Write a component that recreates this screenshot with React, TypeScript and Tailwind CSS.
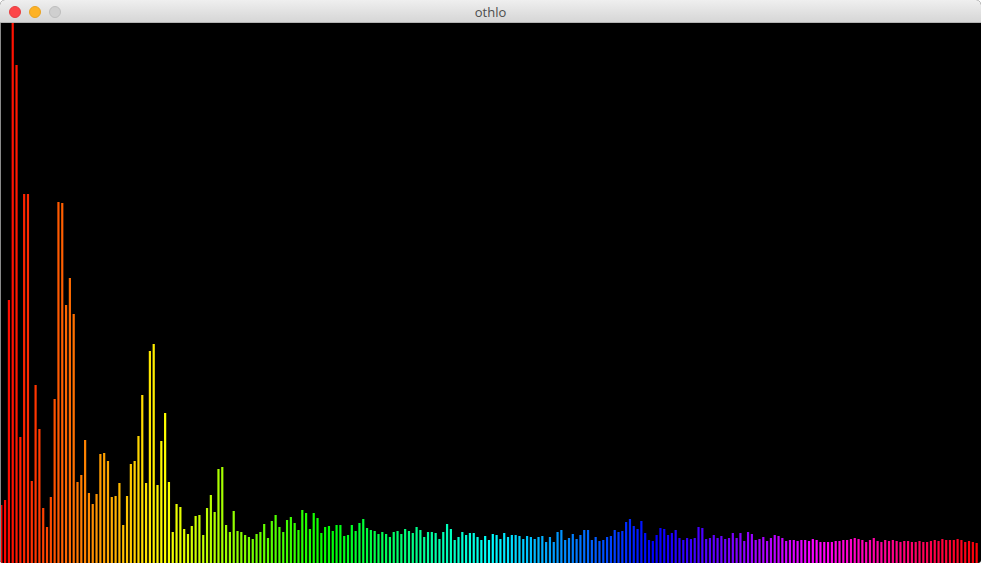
const tops = [
  505, 500, 300, 23, 65, 437, 194, 194, 481, 385, 429, 508, 527, 497, 399, 202, 203, 305, 278, 314,
  482, 475, 440, 493, 504, 494, 454, 453, 461, 497, 496, 483, 525, 496, 464, 461, 436, 395, 483, 351,
  344, 485, 441, 413, 482, 532, 504, 507, 529, 534, 526, 516, 515, 535, 508, 495, 512, 469, 467, 525,
  532, 511, 531, 532, 535, 537, 539, 534, 532, 524, 538, 521, 515, 527, 532, 520, 517, 523, 530, 510,
  513, 529, 513, 518, 533, 527, 526, 531, 525, 525, 536, 535, 525, 531, 523, 519, 528, 530, 531, 534,
  532, 534, 537, 532, 531, 534, 529, 531, 533, 527, 530, 537, 532, 532, 533, 539, 532, 524, 529, 540,
  537, 532, 535, 533, 533, 537, 540, 536, 540, 534, 535, 539, 533, 537, 535, 535, 536, 539, 536, 537,
  539, 537, 536, 542, 537, 542, 532, 530, 540, 538, 534, 539, 535, 530, 530, 540, 537, 541, 540, 537,
  536, 530, 532, 531, 522, 519, 526, 529, 521, 533, 540, 541, 535, 528, 529, 535, 533, 530, 538, 540,
  538, 539, 538, 527, 528, 539, 538, 535, 538, 536, 539, 538, 533, 538, 533, 541, 532, 534, 540, 539,
  537, 541, 538, 535, 536, 538, 541, 540, 540, 541, 540, 540, 541, 539, 540, 542, 542, 542, 542, 541,
  541, 540, 540, 539, 538, 539, 540, 542, 540, 538, 541, 542, 540, 541, 540, 541, 542, 541, 541, 542,
  542, 541, 542, 542, 541, 540, 541, 539, 540, 540, 540, 539, 540, 542, 541, 542, 543,
]

const step = 3.81

export default function App() {
  return (
    <div className="w-[981px] h-[563px] flex flex-col bg-black overflow-hidden rounded-t-[5px] rounded-b-[3px]">
      <div className="h-[23px] shrink-0 relative flex items-center justify-center bg-gradient-to-b from-[#efefef] to-[#d6d6d6] border-b border-[#b4b4b4]">
        <div className="absolute left-[9px] top-[6px] flex gap-[8px]">
          <span className="w-3 h-3 rounded-full bg-[#fc4649] border border-[#e63e41]" />
          <span className="w-3 h-3 rounded-full bg-[#fdb225] border border-[#e9a321]" />
          <span className="w-3 h-3 rounded-full bg-[#cfcfcf] border border-[#bebebe]" />
        </div>
        <span className="text-[13px] pt-[3px] text-[#4d4d4d] font-['Open_Sans',sans-serif]">othlo</span>
      </div>
      <svg width="981" height="540" viewBox="0 23 981 540" className="block">
        {tops.map((top, i) => (
          <rect
            key={i}
            x={i * step + 0.2}
            y={top}
            width={2.2}
            height={563 - top}
            fill={`hsl(${(i / 257) * 360} 100% 50%)`}
          />
        ))}
        <rect x="0" y="23" width="1" height="540" fill="#8a8a8a" />
      </svg>
    </div>
  )
}
